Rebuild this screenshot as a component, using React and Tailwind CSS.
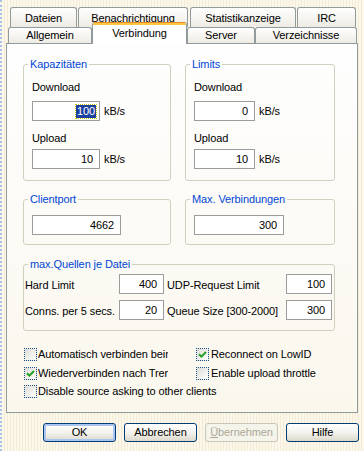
function Tab({ label, className }) {
  return (
    <div className={`flex items-center justify-center rounded-t-[3px] border border-b-0 border-[#919B9C] bg-linear-to-b from-white to-[#EDEBE3] ${className}`}>
      {label}
    </div>
  )
}

function Field({ value, w, selected }) {
  return (
    <div className={`${w} h-[20px] border border-[#9C9C9C] bg-white flex items-center justify-end leading-[13px] ${selected ? 'pr-[3px]' : 'pr-[6px]'}`}>
      {selected ? <span className="bg-[#1D3F9E] text-white px-[1px] outline outline-dotted outline-[#C8C400]">{value}</span> : value}
    </div>
  )
}

function Check({ checked }) {
  return (
    <span className="w-[13px] h-[13px] shrink-0 border border-dotted border-[#1C5180] bg-linear-to-br from-[#DCDCD7] to-white flex items-center justify-center">
      {checked && (
        <svg width="9" height="9" viewBox="0 0 9 9">
          <path d="M1 4.2 L3.4 6.6 L8 2" fill="none" stroke="#21A121" strokeWidth="2" />
        </svg>
      )}
    </span>
  )
}

function Group({ title, className, children }) {
  return (
    <fieldset className={`m-0 p-0 min-w-0 border border-[#D0D0BF] rounded-[3px] ${className}`}>
      <legend className="ml-[4px] px-[2px] text-[#0046D5] leading-[13px]">{title}</legend>
      {children}
    </fieldset>
  )
}

function Button({ label, variant }) {
  if (variant === 'disabled') {
    return (
      <div className="w-[73px] h-[19px] rounded-[3px] border border-[#C9C7BA] bg-[#F5F4EA] text-[#ACA899] flex items-center justify-center">
        <span><span className="underline">Ü</span>bernehmen</span>
      </div>
    )
  }
  return (
    <div className={`w-[73px] h-[19px] rounded-[3px] border border-[#003C74] bg-linear-to-b from-white via-[#F4F3EE] to-[#DCD8CC] flex items-center justify-center ${variant === 'default' ? 'shadow-[inset_0_0_0_2px_#A9C6F3]' : ''}`}>
      {label}
    </div>
  )
}

export default function App() {
  return (
    <div className="w-[364px] h-[451px] overflow-hidden border-l-2 border-dotted border-[#A9C1E8] pt-[7px] text-[11px] tracking-[-0.1px] text-black font-['Liberation_Sans',Arial,sans-serif] bg-[repeating-linear-gradient(90deg,#FBF7EA_0px,#FBF7EA_2px,#F3EBD6_2px,#F3EBD6_3px)]">
      {/* back row of tabs */}
      <div className="flex h-[20px] ml-[8px] leading-[13px]">
        <Tab label="Dateien" className="w-[67px] pt-[2px]" />
        <Tab label="Benachrichtigung" className="w-[110px] ml-[1px] pt-[2px]" />
        <Tab label="Statistikanzeige" className="w-[106px] ml-[2px] pt-[2px]" />
        <Tab label="IRC" className="w-[59px] ml-[1px] pt-[2px]" />
      </div>

      {/* front row of tabs */}
      <div className="flex items-end h-[16px] ml-[6px] leading-[13px]">
        <Tab label="Allgemein" className="w-[84px] h-[16px]" />
        <div className="relative z-10 w-[95px] h-[22px] mb-[-1px] rounded-t-[3px] overflow-hidden border-x border-t border-[#919B9C] border-t-[#E68B2C] bg-white flex flex-col">
          <div className="h-[2px] bg-[#FFC73C]" />
          <div className="flex-1 flex items-center justify-center pb-[3px]">Verbindung</div>
        </div>
        <Tab label="Server" className="w-[68px] h-[16px]" />
        <Tab label="Verzeichnisse" className="w-[102px] h-[16px]" />
      </div>

      {/* tab page */}
      <div className="ml-[4px] w-[352px] h-[370px] border border-[#919B9C] bg-linear-to-b from-[#FEFEFE] to-[#FAF7ED] px-[16px] leading-[13px]">
        <div className="flex gap-[14px] mt-[14px]">
          <Group title="Kapazitäten" className="w-[148px] h-[123px]">
            <div className="pl-[8px]">
              <div className="mt-[10px]">Download</div>
              <div className="flex items-center mt-[7px]">
                <Field value="100" w="w-[68px]" selected />
                <span className="ml-[4px]">kB/s</span>
              </div>
              <div className="mt-[11px]">Upload</div>
              <div className="flex items-center mt-[4px]">
                <Field value="10" w="w-[68px]" />
                <span className="ml-[4px]">kB/s</span>
              </div>
            </div>
          </Group>
          <Group title="Limits" className="w-[150px] h-[123px]">
            <div className="pl-[8px]">
              <div className="mt-[10px]">Download</div>
              <div className="flex items-center mt-[7px]">
                <Field value="0" w="w-[61px]" />
                <span className="ml-[4px]">kB/s</span>
              </div>
              <div className="mt-[11px]">Upload</div>
              <div className="flex items-center mt-[4px]">
                <Field value="10" w="w-[61px]" />
                <span className="ml-[4px]">kB/s</span>
              </div>
            </div>
          </Group>
        </div>

        <div className="flex gap-[14px] mt-[12px]">
          <Group title="Clientport" className="w-[148px] h-[52px]">
            <div className="pl-[8px] mt-[9px]">
              <Field value="4662" w="w-[89px]" />
            </div>
          </Group>
          <Group title="Max. Verbindungen" className="w-[150px] h-[52px]">
            <div className="pl-[8px] mt-[9px]">
              <Field value="300" w="w-[90px]" />
            </div>
          </Group>
        </div>

        <Group title="max.Quellen je Datei" className="w-[312px] h-[73px] mt-[13px]">
          <div className="grid grid-cols-[94px_45px_122px_46px] gap-y-[6px] items-center pl-[1px] mt-[3px]">
            <span className="pt-[2px]">Hard Limit</span>
            <Field value="400" w="w-[45px]" />
            <span className="pl-[3px] pt-[2px]">UDP-Request Limit</span>
            <Field value="100" w="w-[46px]" />
            <span className="pt-[2px]">Conns. per 5 secs.</span>
            <Field value="20" w="w-[45px]" />
            <span className="pl-[3px] pt-[2px]">Queue Size [300-2000]</span>
            <Field value="300" w="w-[46px]" />
          </div>
        </Group>

        <div className="mt-[17px] ml-[1px] flex flex-col">
          <div className="flex h-[19px]">
            <div className="w-[172px] flex gap-[1px]">
              <Check />
              <span className="w-[130px] overflow-hidden whitespace-nowrap">Automatisch verbinden beim Start</span>
            </div>
            <div className="flex gap-[2px]">
              <Check checked />
              <span className="whitespace-nowrap">Reconnect on LowID</span>
            </div>
          </div>
          <div className="flex h-[18px]">
            <div className="w-[172px] flex gap-[1px]">
              <Check checked />
              <span className="w-[130px] overflow-hidden whitespace-nowrap">Wiederverbinden nach Trennung</span>
            </div>
            <div className="flex gap-[2px]">
              <Check />
              <span className="whitespace-nowrap">Enable upload throttle</span>
            </div>
          </div>
          <div className="flex h-[18px] gap-[1px]">
            <Check />
            <span className="whitespace-nowrap">Disable source asking to other clients</span>
          </div>
        </div>
      </div>

      {/* dialog buttons */}
      <div className="flex gap-[8px] ml-[41px] mt-[10px] leading-[13px]">
        <Button label="OK" variant="default" />
        <Button label="Abbrechen" />
        <Button variant="disabled" />
        <Button label="Hilfe" />
      </div>
    </div>
  )
}
